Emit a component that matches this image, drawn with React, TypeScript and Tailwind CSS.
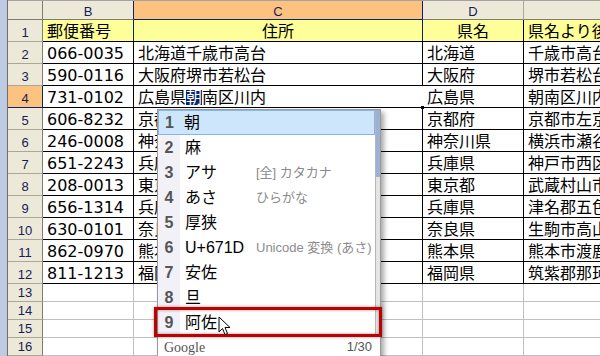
import React from "react";

const rows = [
  ["066-0035", "北海道千歳市高台", "北海道", "千歳市高台"],
  ["590-0116", "大阪府堺市若松台", "大阪府", "堺市若松台"],
  ["731-0102", "", "広島県", "朝南区川内"],
  ["606-8232", "京都府京都市左京区", "京都府", "京都市左京区"],
  ["246-0008", "神奈川県横浜市瀬谷区", "神奈川県", "横浜市瀬谷区"],
  ["651-2243", "兵庫県神戸市西区", "兵庫県", "神戸市西区"],
  ["208-0013", "東京都武蔵村山市", "東京都", "武蔵村山市"],
  ["656-1314", "兵庫県津名郡五色町", "兵庫県", "津名郡五色町"],
  ["630-0101", "奈良県生駒市高山町", "奈良県", "生駒市高山町"],
  ["862-0970", "熊本県熊本市渡鹿", "熊本県", "熊本市渡鹿"],
  ["811-1213", "福岡県筑紫郡那珂川町", "福岡県", "筑紫郡那珂川町"],
];

const candidates = [
  { n: "1", text: "朝", note: "" },
  { n: "2", text: "麻", note: "" },
  { n: "3", text: "アサ", note: "[全] カタカナ" },
  { n: "4", text: "あさ", note: "ひらがな" },
  { n: "5", text: "厚狭", note: "" },
  { n: "6", text: "U+671D", note: "Unicode 変換 (あさ)" },
  { n: "7", text: "安佐", note: "" },
  { n: "8", text: "旦", note: "" },
  { n: "9", text: "阿佐", note: "" },
];

const RowHead = ({ label, active }: { label: string; active?: boolean }) => (
  <div
    className={
      active
        ? "h-full border-r border-b border-r-[#0a246a] border-b-[#0a246a] bg-[#fcc27f] flex items-end justify-center pb-[2px] leading-none text-[13px] text-[#1a1a5a] font-['Liberation_Sans',sans-serif]"
        : "h-full border-r border-b border-r-[#7f7d72] border-b-[#a9a797] bg-[#ece9d8] flex items-end justify-center pb-[2px] leading-none text-[13px] text-[#1a1a5a] font-['Liberation_Sans',sans-serif]"
    }
  >
    {label}
  </div>
);

const Cell = ({ children }: { children?: React.ReactNode }) => (
  <div className="h-full border-r border-b border-black flex items-center pt-[2px] px-[4px] overflow-hidden whitespace-nowrap">
    {children}
  </div>
);

const Empty = () => <div className="h-full border-r border-b border-[#c0c0c0]" />;

export default function App() {
  return (
    <div className="relative w-[600px] h-[356px] overflow-hidden bg-white flex">
      <div className="w-[8px] h-full bg-[#bccbe2] border-r border-[#6e6e6e] shrink-0" />
      <div className="flex-1 flex flex-col font-['DejaVu_Sans','Noto_Sans_CJK_JP',sans-serif] text-[16px] text-black">
        <div className="h-[2px] bg-[#a3a3a3]" />
        <div className="grid grid-cols-[35px_91px_289px_101px_1fr] grid-rows-[19px_repeat(12,22px)_repeat(4,18px)]">
          {/* column headers */}
          <div className="border-r border-b border-[#7f7d72] bg-[#ece9d8]" />
          <div className="border-r border-b border-r-[#0a246a] border-b-[#7f7d72] bg-[#ece9d8] flex items-center justify-center pt-[2px] leading-none text-[13px] text-[#1a1a5a] font-['Liberation_Sans',sans-serif]">
            B
          </div>
          <div className="border-r border-b border-[#0a246a] bg-[#fcc27f] flex items-center justify-center pt-[2px] leading-none text-[13px] text-[#1a1a5a] font-['Liberation_Sans',sans-serif]">
            C
          </div>
          <div className="border-r border-b border-r-[#aca899] border-b-[#7f7d72] bg-[#ece9d8] flex items-center justify-center pt-[2px] leading-none text-[13px] text-[#1a1a5a] font-['Liberation_Sans',sans-serif]">
            D
          </div>
          <div className="border-b border-[#7f7d72] bg-[#ece9d8]" />

          {/* row 1 */}
          <RowHead label="1" />
          <div className="border-r border-b border-r-[#0a246a] border-b-black bg-[#ffff99] flex items-center pt-[2px] px-[4px]">郵便番号</div>
          <div className="border-r border-b border-r-[#0a246a] border-b-black bg-[#ffff99] flex items-center justify-center pt-[2px]">住所</div>
          <div className="border-r border-b border-black bg-[#ffff99] flex items-center justify-center pt-[2px]">県名</div>
          <div className="border-b border-black bg-[#ffff99] flex items-center pt-[2px] px-[4px] overflow-hidden whitespace-nowrap">県名より後ろの住所</div>

          {rows.map((r, i) => (
            <React.Fragment key={r[0]}>
              <RowHead label={String(i + 2)} active={i === 2} />
              <Cell>{r[0]}</Cell>
              {i === 2 ? (
                <div className="relative h-full border-r border-b border-black border-r-transparent flex items-center pt-[2px] px-[4px] whitespace-nowrap">
                  広島県<span className="bg-[#0a246a] text-white leading-[15px]">朝</span>南区川内
                  <div className="absolute right-[-2px] bottom-[-2px] w-[3px] h-[3px] bg-black" />
                </div>
              ) : (
                <Cell>{r[1]}</Cell>
              )}
              <Cell>{r[2]}</Cell>
              <div className="h-full border-b border-black flex items-center pt-[2px] px-[4px] overflow-hidden whitespace-nowrap">{r[3]}</div>
            </React.Fragment>
          ))}

          {[13, 14, 15, 16].map((n) => (
            <React.Fragment key={n}>
              <RowHead label={String(n)} />
              <Empty />
              <Empty />
              <Empty />
              <div className="h-full border-b border-[#c0c0c0]" />
            </React.Fragment>
          ))}
        </div>
      </div>

      {/* IME candidate window */}
      <div className="absolute left-[157px] top-[109px] w-[224px] border border-[#9a9a9a] bg-white shadow-[3px_3px_5px_rgba(0,0,0,0.35)] font-['Liberation_Sans','Noto_Sans_CJK_JP',sans-serif]">
        <div className="flex">
          <div className="flex-1 flex flex-col">
            {candidates.map((c, i) => (
              <div
                key={c.n}
                className={
                  i === 0
                    ? "h-[25px] flex items-center bg-[#cde6fc] border border-[#84b7e8]"
                    : "h-[25px] flex items-center"
                }
              >
                <div
                  className={
                    i === 0
                      ? "w-[21px] h-full flex items-center justify-center font-bold text-[16px] text-[#555]"
                      : "w-[22px] h-full bg-[#f1f1f7] flex items-center justify-center font-bold text-[16px] text-[#555]"
                  }
                >
                  {c.n}
                </div>
                <div className={i === 0 ? "w-[75px] pl-[4px] text-[16px]" : "w-[76px] pl-[5px] text-[16px]"}>{c.text}</div>
                <div className="text-[13px] text-[#8c8c8c] whitespace-nowrap">{c.note}</div>
              </div>
            ))}
          </div>
          <div className="w-[5px] border-l border-[#b5b5b5] bg-[#e4e4e4] flex flex-col">
            <div className="h-[67px] bg-[#9bb2d4]" />
          </div>
        </div>
        <div className="h-[24px] flex items-center justify-between px-[6px] pr-[8px]">
          <span className="font-['Liberation_Serif',serif] text-[14px] text-[#555]">Google</span>
          <span className="text-[13px] text-[#555]">1/30</span>
        </div>
      </div>

      {/* red highlight box */}
      <div className="absolute left-[154px] top-[307px] w-[228px] h-[30px] border-[3px] border-[#c00000] shadow-[inset_0_0_3px_rgba(0,0,0,0.45),0_0_3px_rgba(0,0,0,0.4)]" />

      {/* mouse cursor */}
      <svg className="absolute left-[218px] top-[316px]" width="13" height="20" viewBox="0 0 13 20">
        <path d="M1 1 L1 16 L4.5 12.5 L7 18.5 L9.5 17.5 L7 11.5 L12 11.5 Z" fill="white" stroke="black" strokeWidth="1" strokeLinejoin="miter" />
      </svg>
    </div>
  );
}
